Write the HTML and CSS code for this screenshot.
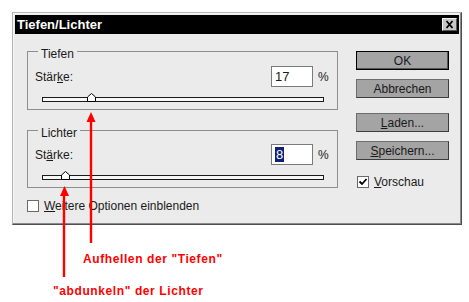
FILE: index.html
```html
<!DOCTYPE html>
<html lang="de">
<head>
    <meta charset="UTF-8">
    <title>Tiefen/Lichter</title>
    <link rel="stylesheet" href="styles.css">
</head>
<body>
    <div class="page">
        <div class="window">
            <div class="titlebar">
                <span class="title">Tiefen/Lichter</span>
                <span class="close">
                    <svg width="13" height="11" viewBox="0 0 13 11"><path d="M3.5 2 L9.5 9 M9.5 2 L3.5 9" stroke="#000" stroke-width="1.8" fill="none"/></svg>
                </span>
            </div>
            <div class="content">
                <div class="groups">
                    <fieldset class="group">
                        <legend>Tiefen</legend>
                        <div class="row">
                            <span class="label">Stär<u>k</u>e:</span>
                            <span class="field">17</span>
                            <span class="unit">%</span>
                        </div>
                        <div class="track">
                            <svg class="thumb" style="left: 17%" width="9" height="9" viewBox="0 0 9 9"><polygon points="4.5,0.5 8.5,4 8.5,8.5 0.5,8.5 0.5,4" fill="#fff" stroke="#000"/></svg>
                        </div>
                    </fieldset>
                    <fieldset class="group group-lights">
                        <legend>Lichter</legend>
                        <div class="row">
                            <span class="label">St<u>ä</u>rke:</span>
                            <span class="field"><span class="selected">8</span></span>
                            <span class="unit">%</span>
                        </div>
                        <div class="track">
                            <svg class="thumb" style="left: 8%" width="9" height="9" viewBox="0 0 9 9"><polygon points="4.5,0.5 8.5,4 8.5,8.5 0.5,8.5 0.5,4" fill="#fff" stroke="#000"/></svg>
                        </div>
                    </fieldset>
                    <div class="check more">
                        <span class="box"></span>
                        <span><u>W</u>eitere Optionen einblenden</span>
                    </div>
                </div>
                <div class="buttons">
                    <button class="btn btn-default">OK</button>
                    <button class="btn">Abbrechen</button>
                    <button class="btn btn-gap"><u>L</u>aden...</button>
                    <button class="btn"><u>S</u>peichern...</button>
                    <div class="check preview">
                        <span class="box">
                            <svg width="10" height="10" viewBox="0 0 10 10"><path d="M1.5 4.5 L4 7 L8.5 2" stroke="#000" stroke-width="1.8" fill="none"/></svg>
                        </span>
                        <span><u>V</u>orschau</span>
                    </div>
                </div>
            </div>
        </div>

        <p class="note note-shadows">Aufhellen der "Tiefen"</p>
        <p class="note note-lights">"abdunkeln" der Lichter</p>

        <!-- annotation arrows drawn over the dialog -->
        <svg class="arrows" width="469" height="302" viewBox="0 0 469 302">
            <line x1="91" y1="121" x2="91" y2="243" stroke="#f00" stroke-width="2.4"/>
            <polygon points="91,112 86.5,122 95.5,122" fill="#f00"/>
            <line x1="64" y1="195" x2="64" y2="277" stroke="#f00" stroke-width="2.4"/>
            <polygon points="64.5,186 60,196 69,196" fill="#f00"/>
        </svg>
    </div>
</body>
</html>
```

FILE: styles.css
```css
body {
    margin: 0;
    background: #fff;
    font-family: "Liberation Sans", Arial, sans-serif;
    font-size: 12px;
    color: #1a1a1a;
}
.page {
    position: relative;
    width: 469px;
    height: 302px;
    padding: 12px 0 0 12px;
    box-sizing: border-box;
    overflow: hidden;
}
.window {
    width: 450px;
    height: 213px;
    box-sizing: border-box;
    padding: 2px;
    background: #ebebeb;
    border: 1px solid #b4b4b4;
    border-right-color: #4e4e4e;
    border-bottom-color: #4e4e4e;
    box-shadow: inset -1px -1px #8a8a8a, inset 1px 1px #f6f6f6;
}
.titlebar {
    display: flex;
    align-items: center;
    justify-content: space-between;
    height: 19px;
    padding: 0 2px;
    background: #000;
}
.title {
    color: #fff;
    font-weight: bold;
    font-size: 13px;
    line-height: 19px;
}
.close {
    display: flex;
    width: 13px;
    height: 11px;
    background: #c6c6c6;
    border: 1px solid #f0f0f0;
    border-right-color: #555;
    border-bottom-color: #555;
}
.content {
    display: flex;
    justify-content: space-between;
    padding: 8px 10px 0 12px;
}
.groups {
    width: 311px;
}
.group {
    margin: 0;
    padding: 6px 8px 7px 7px;
    border: 1px solid #8e8e8e;
}
.group legend {
    padding: 6px 3px 0;
    margin-left: 3px;
    line-height: 12px;
}
.group-lights {
    margin-top: 11px;
    padding-top: 5px;
}
.row {
    display: flex;
    align-items: center;
    height: 21px;
}
.label {
    flex: 1;
}
.field {
    width: 37px;
    height: 19px;
    padding-left: 3px;
    line-height: 19px;
    background: #fff;
    border: 1px solid #7a7a7a;
    font-size: 13px;
}
.selected {
    display: inline-block;
    padding: 0 1px;
    line-height: 15px;
    background: #0c2470;
    color: #fff;
}
.unit {
    margin-left: 5px;
    width: 11px;
}
.track {
    position: relative;
    height: 3px;
    margin: 10px 5px 0 7px;
    background: #f8f8f8;
    border: 1px solid #1a1a1a;
}
.thumb {
    position: absolute;
    bottom: -1px;
    margin-left: -4px;
}
.check {
    display: flex;
    align-items: center;
    gap: 5px;
}
.box {
    display: flex;
    align-items: center;
    justify-content: center;
    width: 10px;
    height: 10px;
    background: #fff;
    border: 1px solid #6a6a6a;
}
.more {
    margin-top: 11px;
}
.buttons {
    display: flex;
    flex-direction: column;
    width: 93px;
    padding-top: 9px;
}
.btn {
    height: 19px;
    margin: 0 0 9px;
    padding: 0;
    font-family: inherit;
    font-size: 12px;
    color: #1a1a1a;
    background: #a4a4a4;
    border: 1px solid #6c6c6c;
    border-right-color: #3c3c3c;
    border-bottom-color: #3c3c3c;
}
.btn-default {
    border: 1px solid #000;
    box-shadow: inset -1px -1px #555;
}
.btn-gap {
    margin-top: 6px;
}
.preview {
    margin-top: 6px;
    margin-left: 1px;
}
.note {
    margin: 27px 0 0 71px;
    color: #f00;
    font-weight: bold;
    font-size: 12px;
    line-height: 14px;
    letter-spacing: 0.6px;
}
.note-lights {
    margin: 18px 0 0 41px;
}
.arrows {
    position: absolute;
    top: 0;
    left: 0;
}
```
